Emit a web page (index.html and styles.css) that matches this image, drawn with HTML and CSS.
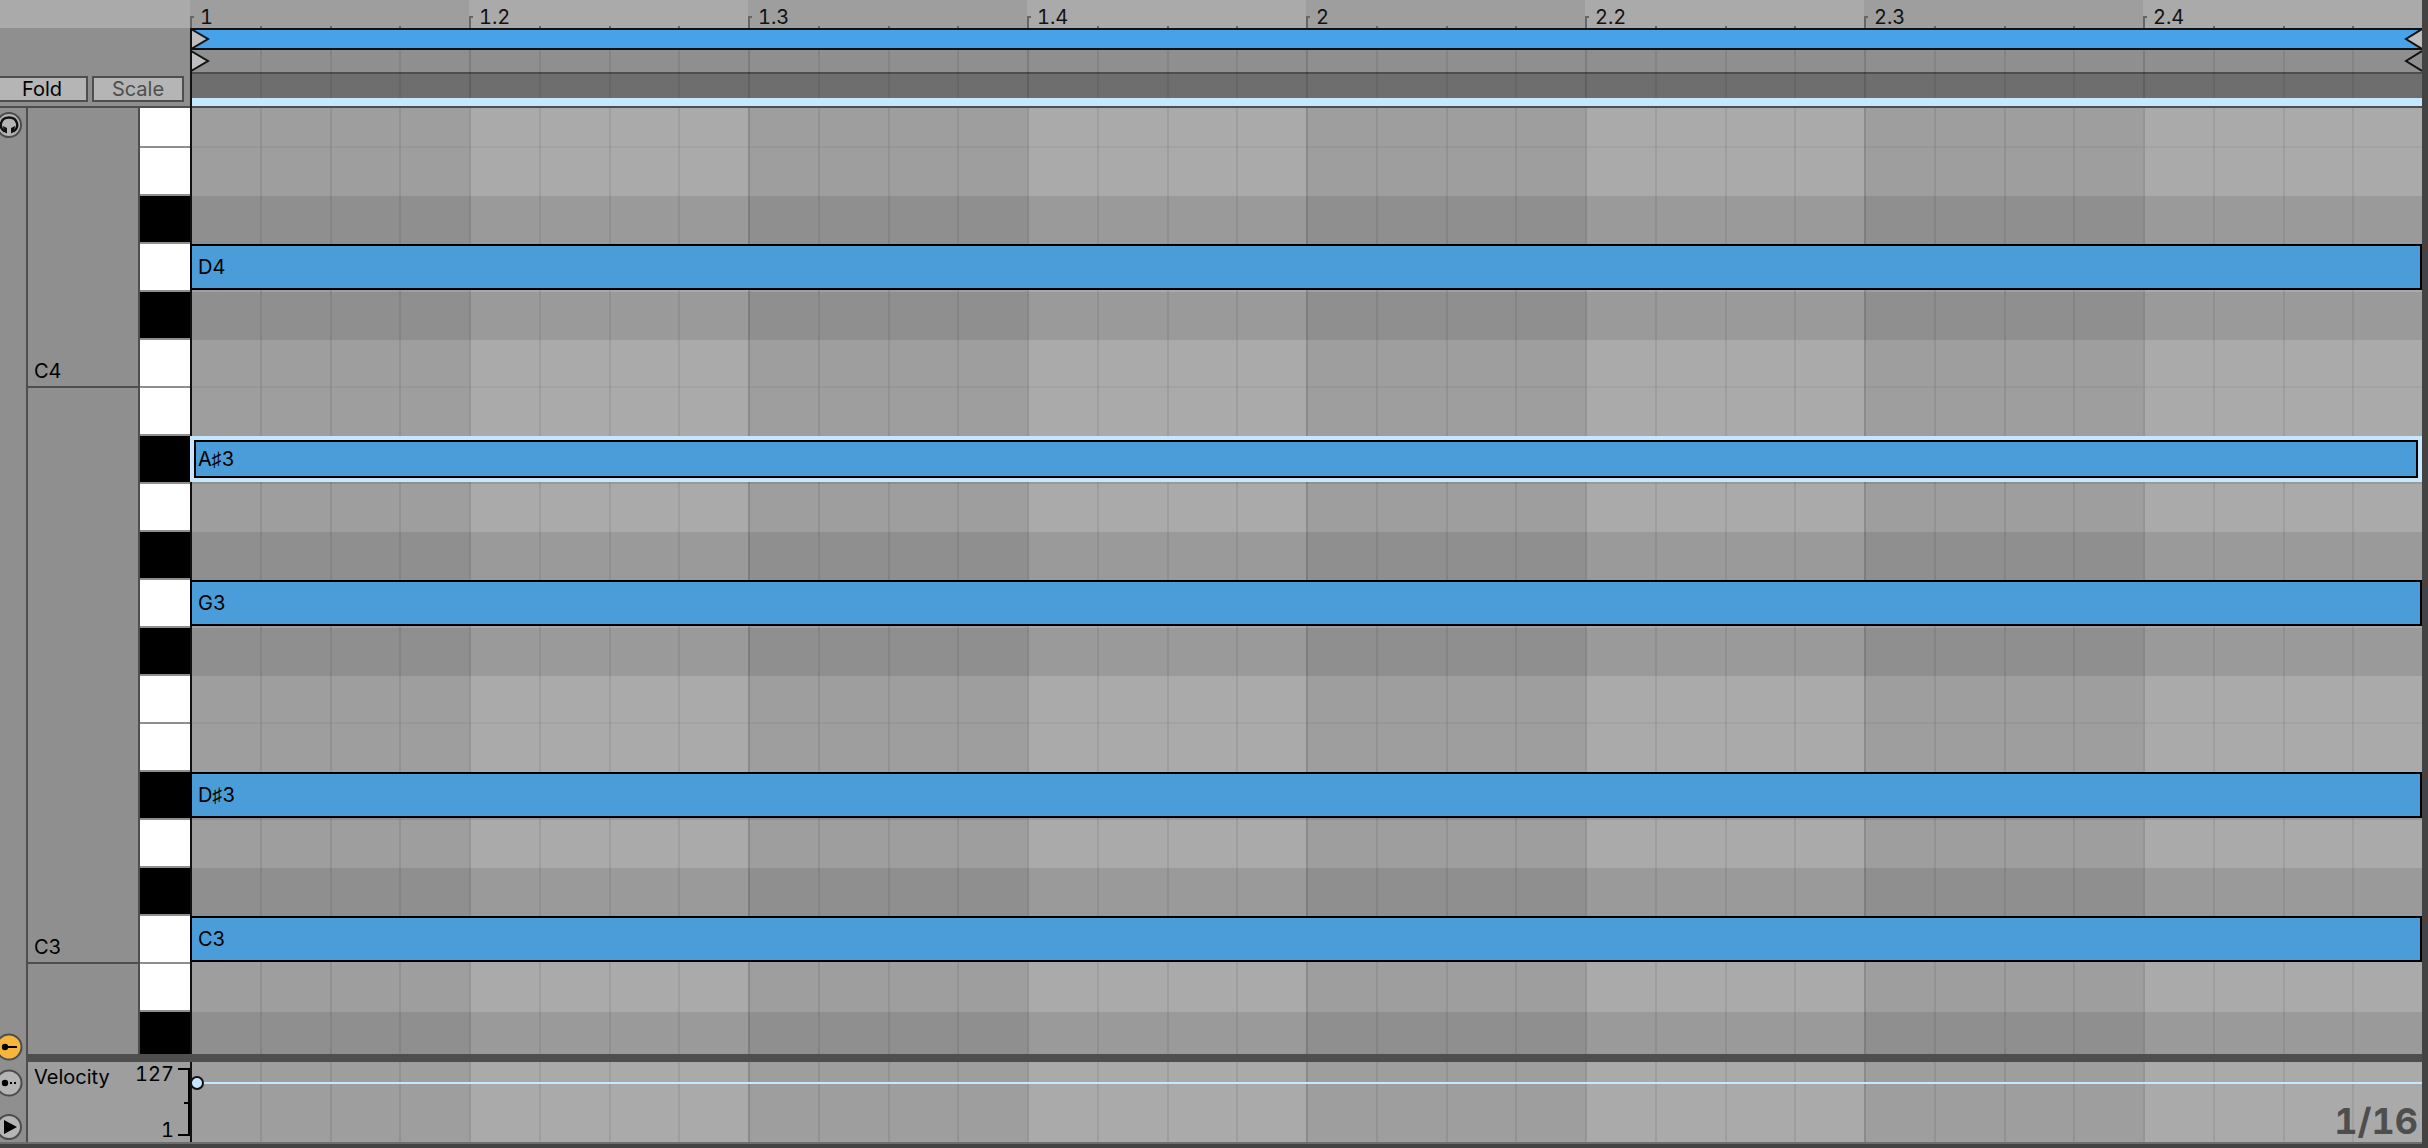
FILE: index.html
```html
<!DOCTYPE html>
<html lang="en">
<head>
<meta charset="utf-8">
<title>MIDI Note Editor</title>
<link rel="stylesheet" href="styles.css">
</head>
<body>
<main class="editor">
  <aside class="side">
    <div class="side-top"></div>
    <div class="modes">
      <button class="mode" type="button">Fold</button>
      <button class="mode mode-off" type="button">Scale</button>
    </div>
    <div class="side-body">
      <div class="strip">
        <button class="round" type="button" aria-label="Preview notes">
          <svg viewBox="0 0 28 28"><circle cx="14" cy="14" r="12" fill="#b5b5b5" stroke="#4c4c4c" stroke-width="2"/><path d="M9.500 20.500C3 16 5.500 6.500 14 6.500S25 16 18.500 20.500" fill="none" stroke="#111" stroke-width="2.400"/><path d="M8 15l4 2v5.500l-3-1.500zM20 15l-4 2v5.500l3-1.500z" fill="#111"/></svg>
        </button>
        <button class="round round-first" type="button" aria-label="Show velocity">
          <svg viewBox="0 0 28 28"><circle cx="14" cy="14" r="12.500" fill="#f7b53c" stroke="#4c4c4c" stroke-width="2"/><circle cx="10" cy="14" r="3.200"/><path d="M10 14h12" stroke="#000" stroke-width="2"/></svg>
        </button>
        <button class="round" type="button" aria-label="Show chance">
          <svg viewBox="0 0 28 28"><circle cx="14" cy="14" r="12.500" fill="#b5b5b5" stroke="#4c4c4c" stroke-width="2"/><circle cx="10" cy="14" r="3.200"/><path d="M15 13h2v2h-2zM19 13h2v2h-2z"/></svg>
        </button>
        <button class="round round-last" type="button" aria-label="Toggle lanes">
          <svg viewBox="0 0 28 28"><circle cx="14" cy="14" r="12" fill="#b5b5b5" stroke="#4c4c4c" stroke-width="2"/><path d="M9 7l13 7-13 7z"/></svg>
        </button>
      </div>
      <div class="side-main">
        <div class="piano">
          <div class="octaves">
            <div class="octave octave-high">C4</div>
            <div class="octave octave-mid">C3</div>
          </div>
          <div class="keys">
            <i></i><i></i><i class="black"></i><i></i><i class="black"></i><i></i><i></i><i class="black"></i><i></i><i class="black"></i><i></i><i class="black"></i><i></i><i></i><i class="black"></i><i></i><i class="black"></i><i></i><i></i><i class="black"></i>
          </div>
        </div>
        <div class="split"></div>
        <div class="velocity-head">
          <span class="velocity-name">Velocity</span>
          <div class="range"><span>127</span><span>1</span></div>
          <svg class="axis" viewBox="0 0 12 80"><path d="M0 7h11v66H0M6 41h5" fill="none" stroke="#000" stroke-width="2"/></svg>
        </div>
      </div>
    </div>
  </aside>

  <section class="timeline">
    <div class="bands"><i></i><i></i><i></i><i></i><i></i><i></i><i></i><i></i></div>
    <div class="rows">
      <div class="ruler">
        <div class="mark"><span>1</span><i></i><i></i><i></i></div>
        <div class="mark"><span>1.2</span><i></i><i></i><i></i></div>
        <div class="mark"><span>1.3</span><i></i><i></i><i></i></div>
        <div class="mark"><span>1.4</span><i></i><i></i><i></i></div>
        <div class="mark"><span>2</span><i></i><i></i><i></i></div>
        <div class="mark"><span>2.2</span><i></i><i></i><i></i></div>
        <div class="mark"><span>2.3</span><i></i><i></i><i></i></div>
        <div class="mark"><span>2.4</span><i></i><i></i><i></i></div>
      </div>
      <div class="loop">
        <svg class="flag" viewBox="0 0 20 22"><path d="M1 1l17 10L1 21z" fill="#bebebe" stroke="#111" stroke-width="2"/></svg>
        <svg class="flag" viewBox="0 0 20 22"><path d="M20 1L4 11l16 10z" fill="#bebebe"/><path d="M20 1L4 11l16 10" fill="none" stroke="#111" stroke-width="2"/></svg>
      </div>
      <div class="markers">
        <svg class="flag" viewBox="0 0 20 22"><path d="M1 1l17 10L1 21z" fill="#bebebe" stroke="#111" stroke-width="2"/></svg>
        <svg class="flag" viewBox="0 0 20 22"><path d="M20 1L4 11l16 10" fill="none" stroke="#111" stroke-width="2"/></svg>
      </div>
      <div class="scrub"></div>
      <div class="clip-bar"></div>
      <div class="lanes">
        <div class="lane lane-edge"></div>
        <div class="lane"></div>
        <div class="lane sharp"></div>
        <div class="lane"><div class="note">D4</div></div>
        <div class="lane sharp"></div>
        <div class="lane lane-edge"></div>
        <div class="lane"></div>
        <div class="lane sharp"><div class="note selected">A♯3</div></div>
        <div class="lane"></div>
        <div class="lane sharp"></div>
        <div class="lane"><div class="note">G3</div></div>
        <div class="lane sharp"></div>
        <div class="lane lane-edge"></div>
        <div class="lane"></div>
        <div class="lane sharp"><div class="note">D♯3</div></div>
        <div class="lane"></div>
        <div class="lane sharp"></div>
        <div class="lane"><div class="note">C3</div></div>
        <div class="lane"></div>
        <div class="lane sharp"></div>
      </div>
      <div class="split"></div>
      <div class="velocity">
        <div class="level"><i class="knob"></i></div>
        <span class="grid-size">1/16</span>
      </div>
    </div>
    <div class="lines"><i></i><i></i><i></i><i></i><i></i><i></i><i></i><i></i><i></i><i></i><i></i><i></i><i></i><i></i><i></i><i></i><i></i><i></i><i></i><i></i><i></i><i></i><i></i><i></i><i></i><i></i><i></i><i></i><i></i><i></i><i></i><i></i></div>
  </section>
</main>
</body>
</html>
```
FILE: styles.css
```css
:root {
  --frame: #434343;
  --line: #4e4e4e;
  --panel: #8f8f8f;
  --pale: #aaaaaa;
  --mid: #9e9e9e;
  --note: #4b9dd9;
  --glow: #c5e8ff;
}

* { box-sizing: border-box; }

body {
  margin: 0;
  background: var(--frame);
  color: #000;
  font: 20px/24px Inter, "Liberation Sans", sans-serif;
  font-variant-numeric: tabular-nums;
}

i { font-style: normal; }

.editor {
  display: grid;
  grid-template-columns: 190px 1fr;
  padding: 0 6px 4px 0;
}

/* Left side: mode buttons, tool strip, piano */
.side {
  display: flex;
  flex-direction: column;
  border-bottom: 2px solid #6e6e6e;
}

.side-top {
  height: 28px;
  background: var(--pale);
}

.modes {
  display: flex;
  align-items: flex-end;
  gap: 4px;
  height: 80px;
  padding-bottom: 4px;
  background: var(--panel);
  border-bottom: 2px solid var(--line);
}

.mode {
  width: 92px;
  height: 26px;
  padding: 0;
  border: 2px solid var(--line);
  background: #b5b5b5;
  color: #000;
  font: inherit;
  line-height: 22px;
}

.mode:first-child { margin-left: -4px; }
.mode-off { color: #4e4e4e; }

.side-body {
  display: flex;
  flex: 1;
}

.strip {
  display: flex;
  flex-direction: column;
  width: 28px;
  padding-top: 3px;
  background: var(--panel);
  border-right: 2px solid var(--line);
}

.round {
  width: 28px;
  height: 28px;
  margin: 0 0 8px -5px;
  padding: 0;
  border: 0;
  background: none;
}

.round svg { display: block; }
.round-first { margin-top: auto; }
.round-last { margin: 8px 0 1px -5px; }

.side-main {
  display: flex;
  flex: 1;
  flex-direction: column;
}

.piano {
  display: grid;
  grid-template-columns: 110px 1fr;
}

.octaves {
  background: var(--panel);
}

.octave {
  display: flex;
  align-items: flex-end;
  padding: 0 0 3px 6px;
  border-bottom: 2px solid var(--line);
}

.octave-high { height: 280px; }
.octave-mid { height: 576px; }

.keys,
.lanes {
  display: grid;
  grid-template-rows: 40px repeat(18, 48px) 42px;
}

.keys { border-left: 2px solid var(--line); }

.keys i {
  background: #fff;
  border-bottom: 2px solid var(--panel);
}

.keys .black { background: #000; }
.keys i:last-child { border-bottom: 0; }

.split {
  position: relative;
  z-index: 2;
  height: 8px;
  background: var(--line);
}

.velocity-head {
  display: flex;
  justify-content: flex-end;
  height: 80px;
  background: var(--mid);
}

.velocity-name {
  margin: 3px auto 0 6px;
}

.range {
  display: flex;
  flex-direction: column;
  justify-content: space-between;
  padding-right: 4px;
  text-align: right;
}

.axis {
  width: 12px;
  height: 80px;
}

/* Right side: stacked bands, rows and grid lines */
.timeline {
  display: grid;
  min-width: 0;
}

.bands,
.rows,
.lines {
  grid-area: 1 / 1;
  min-width: 0;
}

.bands {
  display: grid;
  grid-template-columns: repeat(8, 1fr);
}

.bands i { background: var(--mid); }
.bands i:nth-child(even) { background: var(--pale); }

.lines {
  position: relative;
  z-index: 1;
  display: grid;
  grid-template-columns: repeat(32, 1fr);
  margin: 50px 0 2px;
  pointer-events: none;
}

.lines i { border-left: 2px solid rgba(0, 0, 0, .07); }
.lines i:nth-child(4n + 1) { border-color: rgba(0, 0, 0, .12); }
.lines i:first-child { border-color: #111; }

.rows { border-bottom: 2px solid #6e6e6e; }

.ruler {
  display: grid;
  grid-template-columns: repeat(8, 1fr);
  height: 28px;
}

.mark {
  display: grid;
  grid-template-columns: repeat(4, 1fr);
}

.mark span {
  padding-left: 10px;
  color: #111;
  line-height: 34px;
  background:
    linear-gradient(#666, #666) 0 16px / 2px 12px no-repeat,
    linear-gradient(#666, #666) 0 16px / 4px 2px no-repeat;
}

.mark i { background: linear-gradient(#666, #666) 0 26px / 2px 2px no-repeat; }

.loop,
.markers {
  display: flex;
  justify-content: space-between;
}

.loop {
  position: relative;
  z-index: 2;
  height: 22px;
  background: #48a2e9;
  box-shadow: inset 0 2px #111, inset 0 -2px #111;
}

.markers {
  height: 24px;
  background: var(--panel);
  border-bottom: 2px solid var(--line);
}

.flag {
  position: relative;
  z-index: 2;
  width: 20px;
  height: 22px;
}

.scrub {
  height: 24px;
  background: #6e6e6e;
}

.clip-bar {
  position: relative;
  z-index: 2;
  height: 10px;
  margin-left: 2px;
  background: var(--glow);
  border-bottom: 2px solid var(--line);
}

.sharp { background: rgba(0, 0, 0, .09); }
.lane-edge { border-bottom: 2px solid rgba(0, 0, 0, .04); }

.note {
  position: relative;
  z-index: 2;
  height: 46px;
  padding-left: 6px;
  border: 2px solid #000;
  background: var(--note);
  line-height: 42px;
}

.selected {
  padding-left: 4px;
  border: 4px solid var(--glow);
  box-shadow: inset 0 0 0 2px #000;
  line-height: 38px;
}

.velocity {
  position: relative;
  z-index: 2;
  display: flex;
  flex-direction: column;
  justify-content: space-between;
  height: 80px;
  padding-top: 14px;
}

.level {
  display: flex;
  align-items: center;
  height: 14px;
}

.level::after {
  content: "";
  flex: 1;
  height: 2px;
  background: var(--glow);
}

.knob {
  width: 14px;
  height: 14px;
  border: 2px solid #111;
  border-radius: 50%;
  background: var(--glow);
}

.grid-size {
  align-self: flex-end;
  padding-right: 4px;
  color: #4e4e4e;
  font-size: 36px;
  font-weight: 700;
  line-height: 42px;
}
```
